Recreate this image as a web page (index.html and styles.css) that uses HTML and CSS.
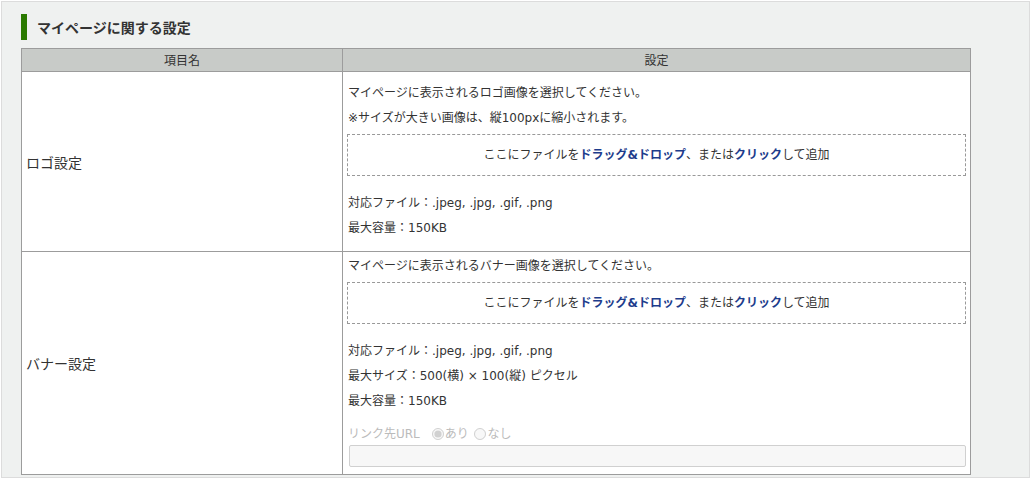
FILE: index.html
```html
<!DOCTYPE html>
<html lang="ja">
<head>
    <meta charset="UTF-8">
    <meta name="viewport" content="width=device-width, initial-scale=1.0">
    <title>マイページ設定</title>
    <link rel="stylesheet" href="styles.css">
</head>
<body>
    <div class="panel">
        <h2 class="section-title">マイページに関する設定</h2>
        <table class="setting-table">
            <thead>
                <tr>
                    <th class="col-name">項目名</th>
                    <th>設定</th>
                </tr>
            </thead>
            <tbody>
                <tr>
                    <td class="item-name">ロゴ設定</td>
                    <td class="item-body logo">
                        <p>マイページに表示されるロゴ画像を選択してください。</p>
                        <p>※サイズが大きい画像は、縦100pxに縮小されます。</p>
                        <div class="dropzone">ここにファイルを<b>ドラッグ&amp;ドロップ</b>、または<b>クリック</b>して追加</div>
                        <p>対応ファイル：.jpeg, .jpg, .gif, .png</p>
                        <p>最大容量：150KB</p>
                    </td>
                </tr>
                <tr>
                    <td class="item-name">バナー設定</td>
                    <td class="item-body banner">
                        <p>マイページに表示されるバナー画像を選択してください。</p>
                        <div class="dropzone">ここにファイルを<b>ドラッグ&amp;ドロップ</b>、または<b>クリック</b>して追加</div>
                        <p>対応ファイル：.jpeg, .jpg, .gif, .png</p>
                        <p>最大サイズ：500(横) × 100(縦) ピクセル</p>
                        <p>最大容量：150KB</p>
                        <div class="link-row">
                            <span class="link-label">リンク先URL</span>
                            <label><input type="radio" name="link" checked disabled>あり</label>
                            <label><input type="radio" name="link" disabled>なし</label>
                        </div>
                        <input class="url-input" type="text" disabled>
                    </td>
                </tr>
            </tbody>
        </table>
    </div>
</body>
</html>
```

FILE: styles.css
```css
body {
    margin: 0;
    font-family: "Noto Sans CJK JP", "Noto Sans", sans-serif;
    color: #333;
    background-color: #fff;
}

.panel {
    margin: 1px 2px 0 1px;
    height: 463px;
    padding: 12px 19px 0;
    background-color: #eff1f0;
    border: 1px solid #dcdcdc;
}

.section-title {
    margin: 0 0 8px;
    height: 26px;
    line-height: 26px;
    padding-left: 10px;
    border-left: 6px solid #2a7a00;
    font-size: 14px;
    font-weight: bold;
}

.setting-table {
    width: 950px;
    border-collapse: collapse;
    background-color: #fff;
    font-size: 12px;
}

.setting-table th,
.setting-table td {
    border: 1px solid #9c9c9c;
}

.setting-table th {
    height: 22px;
    padding: 0;
    line-height: 22px;
    font-weight: normal;
    background-color: #c8cbc8;
}

.col-name {
    width: 320px;
}

.item-name {
    padding: 0 4px;
    font-size: 14px;
    vertical-align: middle;
}

.item-body {
    padding: 0 4px;
    vertical-align: top;
    font-family: "DejaVu Sans", "Noto Sans CJK JP", sans-serif;
}

.item-body.logo {
    padding-top: 12px;
    padding-bottom: 14px;
}

.item-body.banner {
    padding-top: 5px;
    padding-bottom: 7px;
}

.item-body p {
    margin: 0 0 7px;
    line-height: 18px;
    padding-left: 1px;
}

.item-body.logo p:last-child {
    margin-bottom: 0;
}

.dropzone {
    height: 40px;
    line-height: 40px;
    margin: 7px 0 18px;
    border: 1px dashed #999;
    text-align: center;
}

.banner .dropzone {
    margin-top: 6px;
}

.dropzone b {
    color: #1d3c8c;
}

.link-row {
    margin-top: 15px;
    line-height: 18px;
    color: #bbb;
    padding-left: 1px;
}

.link-label {
    margin-right: 8px;
}

.link-row label {
    margin-right: 2px;
}

.link-row input {
    width: 12px;
    height: 12px;
    margin: 0 1px 0 0;
    vertical-align: -2px;
}

.url-input {
    display: block;
    box-sizing: border-box;
    width: 617px;
    height: 22px;
    margin: 2px 0 0 2px;
    border: 1px solid #d0d0d0;
    border-radius: 2px;
    background-color: #f7f7f7;
}
```
